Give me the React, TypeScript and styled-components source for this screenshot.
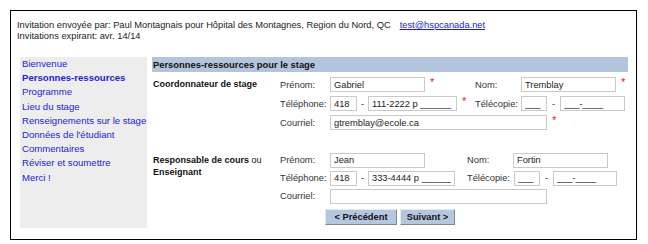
import React from "react";
import styled, { createGlobalStyle } from "styled-components";

const GlobalStyle = createGlobalStyle`
  html, body {
    margin: 0;
    padding: 0;
    background: #fff;
  }
  body {
    font-family: "Liberation Sans", Arial, sans-serif;
    font-size: 9.3px;
    color: #222;
  }
`;

const Page = styled.div`
  padding: 10px 0 0 10px;
`;

const Frame = styled.div`
  border: 1px solid #000;
  width: 625px;
  height: 228px;
`;

const Info = styled.div`
  padding: 9px 0 0 6px;
  line-height: 11px;
`;

const Mail = styled.a`
  color: #1a1adb;
  text-decoration: underline;
  margin-left: 9px;
`;

const Main = styled.div`
  display: flex;
  margin-top: 15px;
  padding-left: 9px;
  gap: 5px;
`;

const Sidebar = styled.ul`
  list-style: none;
  margin: 0;
  padding: 0 0 0 2px;
  width: 125px;
  height: 171px;
  background: #ededed;
`;

const NavItem = styled.li<{ $active?: boolean }>`
  line-height: 14.2px;
  color: #2424d0;
  font-size: 9.6px;
  font-weight: ${(p) => (p.$active ? "bold" : "normal")};
  white-space: nowrap;
`;

const Content = styled.div`
  width: 476px;
`;

const SectionBar = styled.div`
  background: #b3c5dc;
  height: 15px;
  line-height: 15px;
  padding-left: 1px;
  font-weight: bold;
  font-size: 9.4px;
  color: #111;
`;

const Section = styled.div<{ $top: number }>`
  display: flex;
  margin-top: ${(p) => p.$top}px;
`;

const Title = styled.div`
  width: 127px;
  padding: 3px 0 0 1px;
  line-height: 12px;
  font-size: 9px;
  color: #111;
  b {
    font-weight: bold;
  }
`;

const Fields = styled.div`
  display: flex;
  flex-direction: column;
`;

const Row = styled.div<{ $h: number }>`
  display: flex;
  align-items: center;
  height: ${(p) => p.$h}px;
`;

const Label = styled.span<{ $w: number }>`
  width: ${(p) => p.$w}px;
  color: #333;
  white-space: nowrap;
`;

const Input = styled.input<{ $w: number }>`
  box-sizing: border-box;
  width: ${(p) => p.$w}px;
  height: 15px;
  margin: 0;
  padding: 0 3px;
  border: 1px solid #c9c9c9;
  background: #fff;
  font-family: "Liberation Sans", Arial, sans-serif;
  font-size: 9.3px;
  color: #222;
  outline: none;
`;

const Gap = styled.span<{ $w: number }>`
  width: ${(p) => p.$w}px;
  color: #333;
  align-self: stretch;
  display: flex;
  align-items: center;
  justify-content: center;
`;

const Star = styled.span<{ $w: number }>`
  width: ${(p) => p.$w}px;
  align-self: flex-start;
  padding: 2px 0 0 5px;
  box-sizing: border-box;
  color: #e02020;
  font-size: 11px;
  line-height: 10px;
`;

const Buttons = styled.div`
  display: flex;
  gap: 3px;
  margin: 4px 0 0 45px;
`;

const Button = styled.button<{ $w: number }>`
  width: ${(p) => p.$w}px;
  height: 16px;
  padding: 0;
  background: #b5c7de;
  border: 1px solid;
  border-color: #e4ebf4 #7d8796 #7d8796 #e4ebf4;
  font-family: "Liberation Sans", Arial, sans-serif;
  font-size: 9.3px;
  font-weight: bold;
  color: #111;
`;

const nav = [
  "Bienvenue",
  "Personnes-ressources",
  "Programme",
  "Lieu du stage",
  "Renseignements sur le stage",
  "Données de l'étudiant",
  "Commentaires",
  "Réviser et soumettre",
  "Merci !",
];

export default function App() {
  return (
    <Page>
      <GlobalStyle />
      <Frame>
        <Info>
          <div>
            Invitation envoyée par: Paul Montagnais pour Hôpital des Montagnes, Region du Nord, QC
            <Mail href="#">test@hspcanada.net</Mail>
          </div>
          <div>Invitations expirant: avr. 14/14</div>
        </Info>
        <Main>
          <Sidebar>
            {nav.map((n) => (
              <NavItem key={n} $active={n === "Personnes-ressources"}>
                {n}
              </NavItem>
            ))}
          </Sidebar>
          <Content>
            <SectionBar>Personnes-ressources pour le stage</SectionBar>
            <Section $top={3}>
              <Title>
                <b>Coordonnateur de stage</b>
              </Title>
              <Fields>
                <Row $h={19}>
                  <Label $w={50}>Prénom:</Label>
                  <Input $w={95} readOnly value="Gabriel" />
                  <Star $w={50}>*</Star>
                  <Label $w={46}>Nom:</Label>
                  <Input $w={95} readOnly value="Tremblay" />
                  <Star $w={12}>*</Star>
                </Row>
                <Row $h={19}>
                  <Label $w={50}>Téléphone:</Label>
                  <Input $w={27} readOnly value="418" />
                  <Gap $w={11}>-</Gap>
                  <Input $w={89} readOnly value="111-2222 p ______" />
                  <Star $w={18}>*</Star>
                  <Label $w={46}>Télécopie:</Label>
                  <Input $w={26} readOnly value="___" />
                  <Gap $w={13}>-</Gap>
                  <Input $w={65} readOnly value="___-____" />
                </Row>
                <Row $h={19}>
                  <Label $w={50}>Courriel:</Label>
                  <Input $w={217} readOnly value="gtremblay@ecole.ca" />
                  <Star $w={12}>*</Star>
                </Row>
              </Fields>
            </Section>
            <Section $top={19}>
              <Title>
                <b>Responsable de cours</b> ou
                <br />
                <b>Enseignant</b>
              </Title>
              <Fields>
                <Row $h={18}>
                  <Label $w={50}>Prénom:</Label>
                  <Input $w={95} readOnly value="Jean" />
                  <Gap $w={42} />
                  <Label $w={46}>Nom:</Label>
                  <Input $w={95} readOnly value="Fortin" />
                </Row>
                <Row $h={18}>
                  <Label $w={50}>Téléphone:</Label>
                  <Input $w={27} readOnly value="418" />
                  <Gap $w={11}>-</Gap>
                  <Input $w={87} readOnly value="333-4444 p ______" />
                  <Gap $w={12} />
                  <Label $w={47}>Télécopie:</Label>
                  <Input $w={26} readOnly value="___" />
                  <Gap $w={13}>-</Gap>
                  <Input $w={64} readOnly value="___-____" />
                </Row>
                <Row $h={18}>
                  <Label $w={50}>Courriel:</Label>
                  <Input $w={217} readOnly value="" />
                </Row>
                <Buttons>
                  <Button $w={72}>&lt; Précédent</Button>
                  <Button $w={55}>Suivant &gt;</Button>
                </Buttons>
              </Fields>
            </Section>
          </Content>
        </Main>
      </Frame>
    </Page>
  );
}
